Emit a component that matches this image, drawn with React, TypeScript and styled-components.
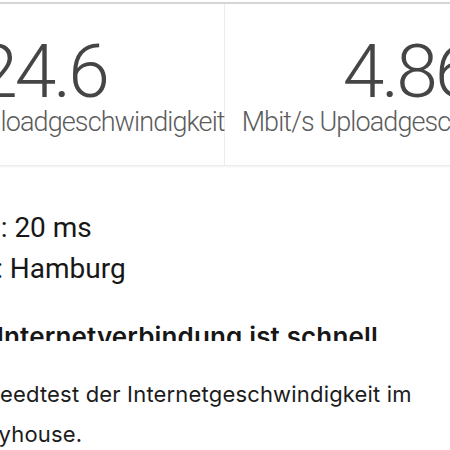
import React from 'react'
import styled, { createGlobalStyle } from 'styled-components'

const variables = {
    textGray: '#454545',
    labelGray: '#5c5c5c',
    line: '#ececec',
    ink: '#171717'
};

const GlobalStyle = createGlobalStyle`
  html, body {
    margin: 0;
    padding: 0;
    background: #ffffff;
    overflow: hidden;
  }
`;

const Page = styled.div`
  width: 450px;
  height: 450px;
  overflow: hidden;
  background: #ffffff;
`;

const StatsCard = styled.section`
  display: grid;
  grid-template-columns: 366px 366px;
  width: 732px;
  margin: 2px 0 0 -141px;
  border-top: 2px solid #d5d5d5;
  border-bottom: 1px solid ${variables.line};
  box-shadow: 0 1px 2px rgba(0, 0, 0, 0.06);
`;

const StatCell = styled.div<{ $divider?: boolean }>`
  display: flex;
  flex-direction: column;
  align-items: center;
  padding: 30px 0 30px;
  border-right: ${p => (p.$divider ? `1px solid ${variables.line}` : 'none')};
  font-family: Roboto, "Liberation Sans", sans-serif;
`;

const StatValue = styled.span`
  font-size: 75px;
  font-weight: 300;
  line-height: 75px;
  letter-spacing: -3px;
  color: ${variables.textGray};
`;

const StatLabel = styled.span`
  font-size: 27px;
  font-weight: 300;
  line-height: 26px;
  letter-spacing: -0.9px;
  white-space: nowrap;
  color: ${variables.labelGray};
`;

const InfoList = styled.div`
  margin: 41px 0 0 -55px;
  font-family: Roboto, "Liberation Sans", sans-serif;
  font-size: 28px;
  line-height: 41px;
  color: ${variables.ink};
`;

const InfoRow = styled.div`
  white-space: nowrap;
`;

const HeadingClip = styled.div`
  height: 20px;
  margin-top: 32px;
  overflow: hidden;
`;

const Heading = styled.h2`
  margin: 0 0 0 -83px;
  font-family: Inter, "Noto Sans", sans-serif;
  font-size: 26px;
  font-weight: 600;
  line-height: 1.2;
  letter-spacing: 0.15px;
  white-space: nowrap;
  color: ${variables.ink};
`;

const Intro = styled.p`
  width: 470px;
  margin: 33px 0 0 -28px;
  font-family: Inter, "Noto Sans", sans-serif;
  font-size: 22px;
  font-weight: 400;
  line-height: 40px;
  letter-spacing: 0.18px;
  color: #1c1c1c;
`;

const stats = [
    {value: '24.6', label: 'Mbit/s Downloadgeschwindigkeit'},
    {value: '4.86', label: 'Mbit/s Uploadgeschwindigkeit'}
];

const App: React.FC = () => {
    return (
        <Page>
            <GlobalStyle />
            <StatsCard>
                {stats.map((s, i) => (
                    <StatCell key={s.label} $divider={i === 0}>
                        <StatValue>{s.value}</StatValue>
                        <StatLabel>{s.label}</StatLabel>
                    </StatCell>
                ))}
            </StatsCard>
            <InfoList>
                <InfoRow>Ping: 20 ms</InfoRow>
                <InfoRow>Hub: Hamburg</InfoRow>
            </InfoList>
            <HeadingClip>
                <Heading>Deine Internetverbindung ist schnell</Heading>
            </HeadingClip>
            <Intro>
                Speedtest der Internetgeschwindigkeit im Skyhouse.
            </Intro>
        </Page>
    )
};

export default App
